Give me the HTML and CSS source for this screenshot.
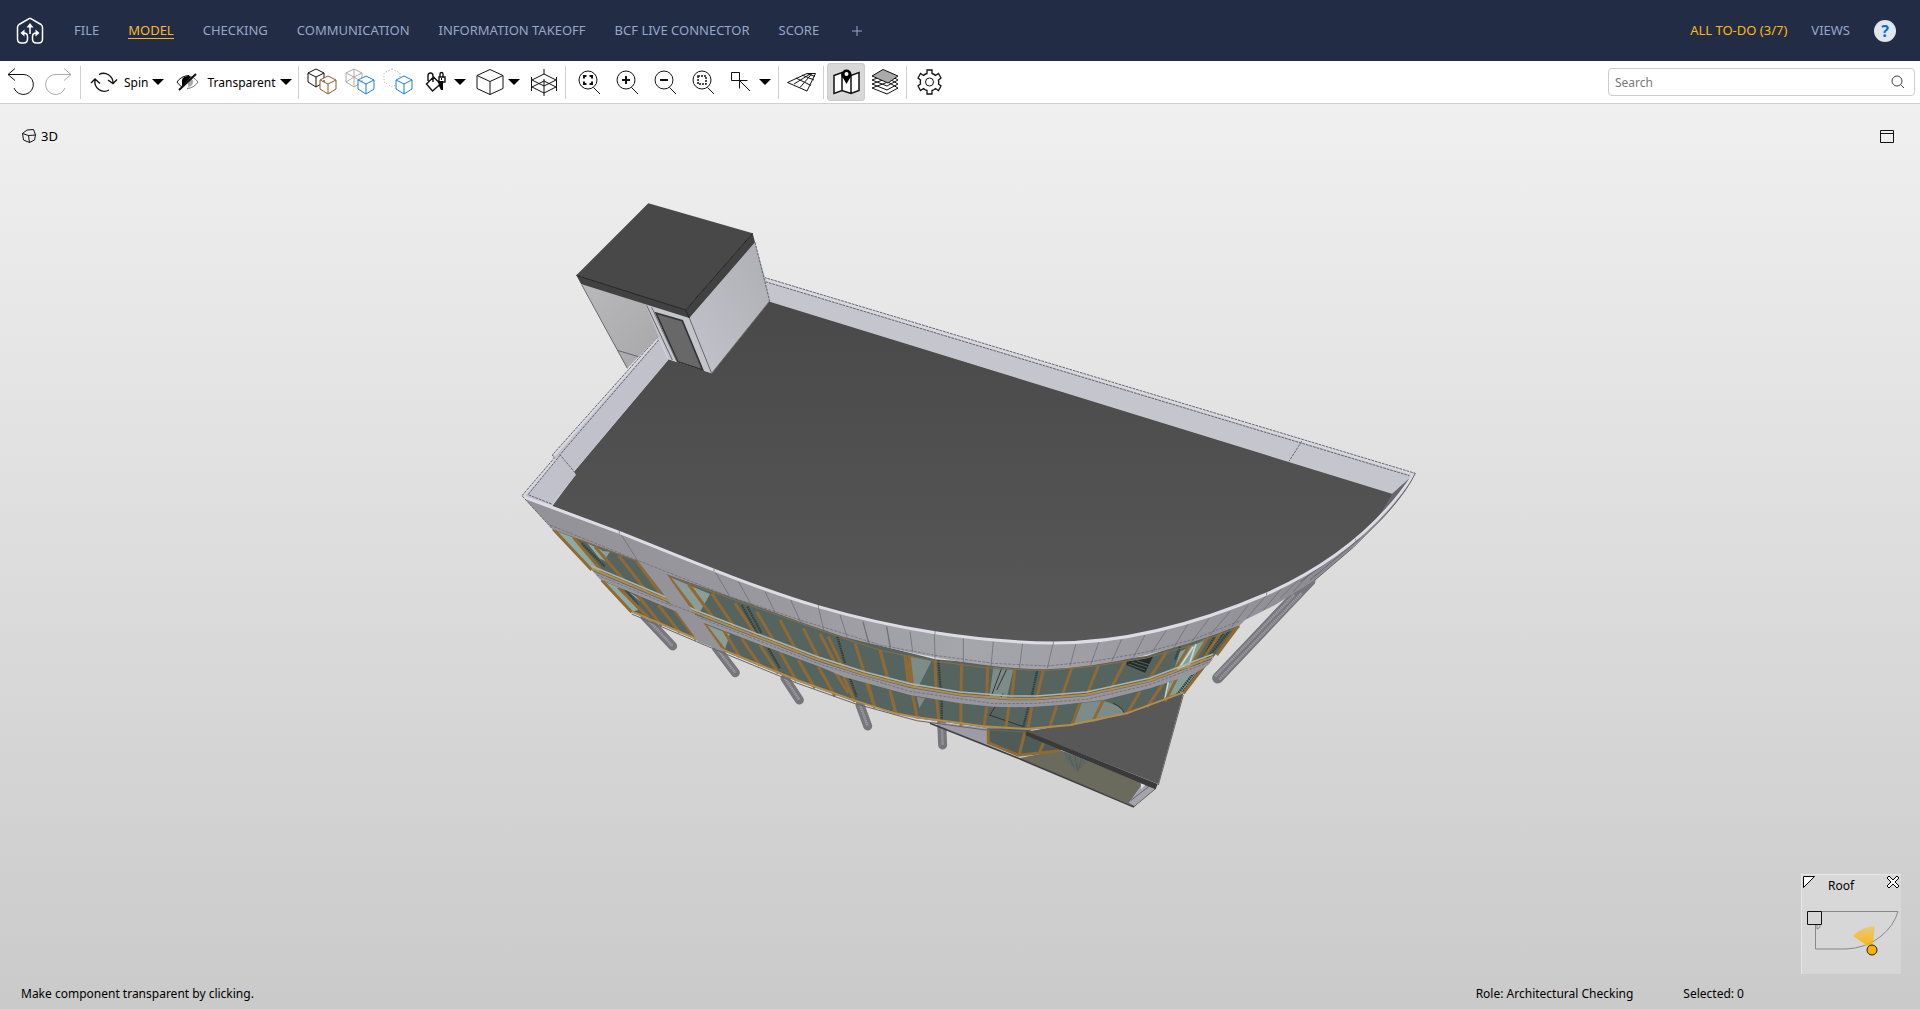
FILE: index.html
```html
<!DOCTYPE html>
<html lang="en">
<head>
<meta charset="utf-8">
<title>Model</title>
<link rel="stylesheet" href="styles.css">
</head>
<body>
<svg class="defs" aria-hidden="true">
  <symbol id="cube" viewBox="0 0 18 20"><path d="M9 1l8 4v9l-8 5-8-5V5zM1 5l8 4 8-4M9 9v10"/></symbol>
  <symbol id="caret" viewBox="0 0 12 38"><path d="M0 16h12l-6 6z"/></symbol>
</svg>
<header class="topbar">
  <a class="logo" href="#" aria-label="Home">
    <svg viewBox="0 0 28 28" width="28" height="28"><path class="stroke" d="M14 1.200L25 7.500Q26.500 8.500 26.500 10.500V22q0 4-4 4h-2q-4 0-4-4v-2.500q0-3.500 4-3.500M14 1.200L3 7.500Q1.500 8.500 1.500 10.500V22q0 4 4 4h2q4 0 4-4v-2.500q0-3.500-4-3.500M14 17V9"/><path class="fill" d="M14 6l3.500 4.500h-7zM4.500 16L8.500 12.500v7zM23.500 16L19.500 12.500v7z"/></svg>
  </a>
  <nav class="tabs">
    <a href="#">FILE</a>
    <a href="#" class="current">MODEL</a>
    <a href="#">CHECKING</a>
    <a href="#">COMMUNICATION</a>
    <a href="#">INFORMATION TAKEOFF</a>
    <a href="#">BCF LIVE CONNECTOR</a>
    <a href="#">SCORE</a>
  </nav>
  <button class="add" aria-label="Add view"><svg viewBox="0 0 12 12" width="12" height="12"><path d="M6 1v10M1 6h10"/></svg></button>
  <nav class="tabs tabs-right">
    <a href="#" class="todo">ALL TO-DO (3/7)</a>
    <a href="#">VIEWS</a>
  </nav>
  <button class="help" aria-label="Help">?</button>
</header>

<div class="toolbar">
  <button class="tool" aria-label="Undo"><svg viewBox="0 0 38 38"><path d="M14 5.500l-7 6 7 6M7 11.500h15A10 10 0 1 1 13 25"/></svg></button>
  <button class="tool off" aria-label="Redo"><svg viewBox="0 0 38 38"><path d="M25 5.500l7 6-7 6M32 11.500H17A10 10 0 1 0 26 25"/></svg></button>
  <span class="sep"></span>
  <button class="mode"><svg viewBox="0 0 28 38"><path stroke-width="1.400" d="M9 11.500A9.500 9.500 0 0 1 23 20M18 17l5 3.500 4-4M19 27A9.500 9.500 0 0 1 5 17M1 20l4-4 5 4.500"/></svg><span>Spin</span><svg class="caret"><use href="#caret"/></svg></button>
  <button class="mode"><svg viewBox="0 0 28 38"><path stroke="#777" d="M14 12.500q7 1 11 6.500-4 6-11 6.500"/><path class="gray" d="M15 14a5 5 0 0 1 0 10z"/><path d="M4 19q4-6 12-6.500M4 19q2 3 5 5"/><path class="solid" d="M9 24V17q1-4 7-4l2 1z"/><path stroke-width="2" d="M6 27L23 11"/></svg><span>Transparent</span><svg class="caret"><use href="#caret"/></svg></button>
  <span class="sep"></span>
  <button class="tool" aria-label="Show all"><svg viewBox="0 0 38 38"><use href="#cube" x="5" y="5" width="18" height="20"/><g class="brown"><use href="#cube" x="17" y="12" width="18" height="20"/></g></svg></button>
  <button class="tool" aria-label="Show transparent"><svg viewBox="0 0 38 38"><g class="ghost"><use href="#cube" x="5" y="5" width="18" height="20"/><path d="M14 6v8l8 5M14 14l-8 5"/></g><g class="blue"><use href="#cube" x="17" y="12" width="18" height="20"/></g></svg></button>
  <button class="tool" aria-label="Hide others"><svg viewBox="0 0 38 38"><path class="dots" d="M14 6l8 4v9l-8 5-8-5v-9z"/><g class="blue"><use href="#cube" x="17" y="12" width="18" height="20"/></g></svg></button>
  <button class="tool" aria-label="Colorize"><svg viewBox="0 0 38 38"><path stroke-width="1.400" d="M10.500 21l7-7 7 7-8 7zM12 18v-5q0-3 2.500-3t2.500 3v6M24 14v-3q0-1.500 1.500-1.500T27 11v3M23 14h6v5h-6z"/><path class="solid" d="M22 18h5v9h-2l-2-4zM25 15h1v2h-1z"/></svg></button>
  <button class="drop" aria-label="Colorize options"><svg class="caret"><use href="#caret"/></svg></button>
  <button class="tool" aria-label="View direction"><svg viewBox="0 0 38 38"><path d="M20 6.500l13 6v13l-13 6-13-6v-13zM7 12.500l13 6 13-6M20 18.500v13"/></svg></button>
  <button class="drop" aria-label="View direction options"><svg class="caret"><use href="#caret"/></svg></button>
  <button class="tool" aria-label="Section box"><svg viewBox="0 0 38 38"><path d="M7.500 14v14M32.500 14v14M20 6v5M20 16v17M8 17l12-6 12 6-12 6zM8 24l12-6 12 6-12 6z"/></svg></button>
  <span class="sep"></span>
  <button class="tool" aria-label="Zoom to fit"><svg viewBox="0 0 38 38"><path d="M24.500 24.500L31 31"/><circle cx="19" cy="17" r="9"/><path stroke-width="2" d="M15 15.500V13h2.500M20.500 13H23v2.500M23 18.500V21h-2.500M17.500 21H15v-2.500"/></svg></button>
  <button class="tool" aria-label="Zoom in"><svg viewBox="0 0 38 38"><path d="M24.500 24.500L31 31"/><circle cx="19" cy="17" r="9"/><path stroke-width="2" d="M15 17h8M19 13v8"/></svg></button>
  <button class="tool" aria-label="Zoom out"><svg viewBox="0 0 38 38"><path d="M24.500 24.500L31 31"/><circle cx="19" cy="17" r="9"/><path stroke-width="2" d="M15 17h8"/></svg></button>
  <button class="tool" aria-label="Zoom to selection"><svg viewBox="0 0 38 38"><path d="M24.500 24.500L31 31"/><circle cx="19" cy="17" r="9"/><path stroke-width="1.500" stroke-dasharray="2 1" d="M15 13h8v8h-8z"/></svg></button>
  <button class="tool" aria-label="Select"><svg viewBox="0 0 38 38"><path d="M10.500 9.500h8v8h-8zM18.500 17.500v8M18.500 17.500h8M18.500 17.500l10.500 10.500"/></svg></button>
  <button class="drop" aria-label="Select options"><svg class="caret"><use href="#caret"/></svg></button>
  <span class="sep"></span>
  <button class="tool" aria-label="Grid"><svg viewBox="0 0 38 38"><path d="M5.500 19.500L25 10.500h8.500L25 28zM12 21l17-10.500M18 24.500l12-14M14 15l15 7.500M20 12l12 5M25 10.500l8 3"/></svg></button>
  <span class="sep"></span>
  <button class="tool active" aria-label="Map"><svg viewBox="0 0 38 38"><path class="white" stroke-width="1.500" d="M7 12.500l8-3 9 3 8-3v18l-8 3-9-3-8 3zM15 9.500v18M24 12.500v18"/><path class="solid" d="M15 13h9l-4.500 8z"/><circle class="solid" cx="19.500" cy="11.500" r="5"/><circle cx="19.500" cy="11" r="2" fill="#fff" stroke="none"/></svg></button>
  <button class="tool" aria-label="Layers"><svg viewBox="0 0 38 38"><path class="white" d="M7 25l16-6 10 6-11 6zM7 21l16-6 10 6-11 6zM7 17l16-6 10 6-11 6z"/><path fill="#aaa" d="M7 13l11-6.500 15 6.500-10 7z"/></svg></button>
  <span class="sep"></span>
  <button class="tool" aria-label="Settings"><svg viewBox="0 0 38 38"><path stroke-width="1.300" d="M17 7h5v3.500q2 .5 3.500 2l3-2 2.500 4.500-2.500 2q.500 2 0 4l2.500 2-2.500 4.500-3-2q-1.500 1.500-3.500 2V31h-5v-3.500q-2-.500-3.500-2l-3 2L8 23l2.500-2q-.500-2 0-4L8 15l2.500-4.500 3 2q1.500-1.500 3.500-2z"/><circle cx="19.500" cy="19" r="4"/></svg></button>
  <label class="search">
    <input type="text" placeholder="Search" aria-label="Search">
    <svg viewBox="0 0 14 14" width="14" height="14"><circle cx="6" cy="6" r="5"/><path d="M9.500 9.500L13 13"/></svg>
  </label>
</div>

<main class="viewport">
  <div class="view-head">
    <svg viewBox="0 0 14 14" width="14" height="14"><path d="M.5 4.500L5 1l6.500-.5 2 5.500-1 5-5 2.500-6-2.500zM.5 4.500l6 2 7-.5M6.500 6.500l1 7"/></svg>
    <h1>3D</h1>
    <button class="maximize" aria-label="Maximize view"><svg viewBox="0 0 14 13" width="14" height="13"><path d="M.5.5h13v12H.5zM.5 3.500h13"/></svg></button>
  </div>

  <svg class="scene" viewBox="0 504 5760 2400" role="img" aria-label="3D model of a building seen from above">
    <defs>
      <linearGradient id="roof" x1="0" y1="0" x2="0" y2="1"><stop offset="0" stop-color="#494949"/><stop offset="1" stop-color="#585858"/></linearGradient>
      <linearGradient id="band" x1="0" y1="0" x2="1" y2="0"><stop offset="0" stop-color="#949299"/><stop offset=".25" stop-color="#98979e"/><stop offset=".5" stop-color="#a5a6ab"/><stop offset=".7" stop-color="#9b9aa1"/><stop offset="1" stop-color="#85848b"/></linearGradient>
      <linearGradient id="wall" x1="0" y1="0" x2="1" y2="1"><stop offset="0" stop-color="#b9b9bb"/><stop offset="1" stop-color="#a6a6aa"/></linearGradient>
      <linearGradient id="side" x1="1" y1="0" x2="0" y2="1"><stop offset="0" stop-color="#aeaeb4"/><stop offset="1" stop-color="#c3c3cc"/></linearGradient>
    </defs>

    <!-- columns below the facade -->
    <g class="column">
      <path d="M1935 1850L2018 1938M2150 1945L2206 2018M2355 2035L2398 2100M2580 2115L2603 2178M2825 2170L2828 2235"/>
      <path class="wide" d="M3930 1742L3653 2034"/>
    </g>
    <g class="column-ribs">
      <path d="M1935 1850L2018 1938M2150 1945L2206 2018M2355 2035L2398 2100M2580 2115L2603 2178M2825 2170L2828 2235M3882 1785L3645 2030M3905 1780L3658 2038"/>
    </g>

    <!-- entrance wing -->
    <g transform="translate(2580 1740)">
      <path fill="#9d9ca6" d="M215 425L390 445L390 495L470 533L260 448z"/>
      <path fill="#6a6b5c" d="M475 535L600 510L850 610L807 672z"/>
      <path fill="#4f5b57" d="M385 445L500 445L620 508L475 528L385 488z"/>
      <path class="gold" d="M385 445V488L475 526L600 512M495 455L477 526M550 490L537 520"/>
      <path fill="#5c6a60" class="edge" d="M612 516Q622 555 655 576L678 543z"/>
      <path class="rib" d="M628 528L640 560M645 530L652 570M664 537L655 572"/>
      <path fill="#a5a4ac" class="edge" d="M845 612L888 625L822 680L805 668z"/>
      <path class="edge" d="M812 662L868 618"/>
      <path fill="#dadada" d="M842 610l14 4-12 14z"/>
      <path fill="#585858" d="M498 455L700 420L970 340L895 612z"/>
      <path fill="#3a3a3a" d="M497 453L893 612L887 628L497 466z"/>
      <path stroke="#3f3f3f" stroke-width="5" fill="none" d="M210 430L475 535L822 681"/>
      <path class="edge" d="M970 345L895 615"/>
    </g>

    <!-- curved glass facade -->
    <path fill="#56645f" d="M1658 1585L1910 1680L2190 1788L2530 1908L2805 1978L3140 2006L3440 1968L3720 1875L3550 2080L3510 2095L3380 2143L3210 2178L3080 2190L2950 2182L2750 2155L2565 2105L2390 2043L2175 1955L1895 1837z"/>
    <g transform="translate(1530 1440)">
      <path fill="#8faaa0" d="M140 152L190 172L290 287L245 268zM278 302L325 322L385 390L365 395zM232 190L275 210L300 250L268 235zM355 335L380 350L392 365z"/>
      <path fill="#8c9c97" d="M478 290L600 342L572 392L552 392zM585 433L660 462L645 508zM275 212L300 215L285 238z"/>
    </g>
    <g transform="translate(2580 1740)">
      <path fill="#7b8c89" d="M150 228L215 242L175 320L158 318zM400 262L460 268L440 355L388 350zM170 350L195 355L178 385zM640 432L665 368L730 362L700 425zM700 425L730 362Q780 375 795 400z"/>
      <path fill="#84a199" d="M960 215L1040 175L990 262L940 275zM925 310L1020 262L975 335L920 350z"/>
      <path stroke="#333" fill="none" stroke-width="3" d="M410 330L440 268M395 345L425 265M388 405L490 440M388 408L430 340M760 370Q785 380 793 400"/>
      <path fill="#232a28" d="M800 245L880 228L855 278L800 255z"/>
      <path stroke="#72807b" stroke-width="2" d="M805 252L855 270M815 246L862 262M830 242L868 254"/>
      <path stroke="#c8d8d2" stroke-width="5" fill="none" d="M1008 192L985 262M955 268L1000 200M925 305L915 355M950 262L985 258"/>
      <path class="shade" d="M1090 160L1010 262M1110 150L1040 238M1010 268L950 345M1030 258L965 340M1065 168L1020 250M960 200L945 240"/>
    </g>
    <!-- interior columns behind the glass -->
    <path class="shade" d="M2225 1815L2275 1905M2242 1820L2285 1900M2512 1910L2535 1990M2305 1945L2340 2005M2550 2035L2570 2090M2815 1980L2822 2070M2825 2095V2165M3112 2010L3095 2090M3085 2120L3070 2180M1745 1630L1815 1700M1870 1760L1915 1815"/>

    <g transform="translate(1530 1440)">
      <path class="gold" d="M130 148L245 270M190 172L290 290M255 200L350 310M325 225L410 335M380 243L465 360M275 300L365 397M325 322L415 412M385 348L455 437M445 375L510 458M490 385L560 480"/>
      <path class="gold" d="M474 287L560 400M535 312L615 420M605 340L672 440M675 370L740 468M740 395L797 492M810 420L862 518M880 445L930 543M930 462L975 548M955 470L998 562M1035 490L1065 585M1110 510L1135 603M1185 525L1195 612"/>
      <path class="gold" d="M580 428L645 513M640 450L690 532M695 475L750 557M750 495L805 580M810 515L860 603M865 540L915 625M925 560L975 648M975 575L1015 640M1000 590L1035 665M1070 610L1095 683M1140 630L1158 700"/>
    </g>
    <g transform="translate(2580 1740)">
      <path class="gold" d="M60 210L85 302M135 225L155 318M147 226L158 318M225 240L228 328M305 250L303 345M383 260L380 350M465 265L455 355M550 270L530 355M635 265L605 352M715 258L680 345M795 245L750 332M920 215L865 302M990 195L935 285M1045 170L990 262M1085 155L1020 250M1135 138L1070 225"/>
      <path class="gold" d="M25 313L45 385M90 330L107 400M158 345L172 415M230 357L237 428M303 370V437M380 380L372 442M447 380L437 447M515 382L503 450M590 378L568 445M660 370L635 438M730 360L698 425M840 335L800 402M910 310L860 382M950 295L915 365M1035 255L970 340"/>
    </g>
    <!-- window sills and heads -->
    <path class="sill-light" d="M1775 1698L1995 1790L2085 1830L2270 1901L2460 1973L2595 2016L2730 2051L2880 2076L3030 2088L3110 2088L3260 2076L3450 2034L3640 1962"/>
    <path class="gold thin" d="M1775 1706L1995 1798L2085 1838L2270 1909L2460 1981L2595 2024L2730 2059L2880 2084L3030 2096L3110 2096L3260 2084L3450 2042L3640 1970"/>
    <path class="gold thin" d="M1895 1834L2090 1917L2175 1952L2390 2040L2565 2102L2685 2140L2750 2152L2950 2179L3080 2187L3210 2175L3380 2140L3510 2092L3550 2077"/>
    <path class="gold head" d="M1658 1588L1910 1683M2000 1726L2190 1795L2400 1869L2530 1914L2640 1951L2805 1984L2980 2006L3140 2012L3280 1999L3440 1974L3580 1934L3720 1880"/>
    <path class="edge" d="M1895 1842L2090 1925L2175 1961L2390 2049L2565 2111L2750 2162L2950 2189L3080 2196"/>
    <!-- band between the storeys -->
    <path fill="#97969e" d="M1778 1713L1995 1804L2085 1844L2270 1914L2460 1987L2595 2029L2730 2064L2880 2089L3030 2101L3110 2101L3260 2089L3450 2047L3640 1976L3625 1995L3580 2023L3450 2065L3310 2100L3180 2115L3080 2122L2980 2120L2880 2110L2730 2085L2530 2030L2460 2000L2270 1930L2110 1868L1970 1810L1800 1738z"/>
    <path class="dash" d="M1790 1724L2110 1858L2460 1993L2730 2074L2980 2111L3110 2110L3260 2098L3450 2054L3630 1985"/>
    <path fill="#95939a" d="M1910 1678L1998 1720L2084 1842L2110 1868L2172 1955L2135 1941L2095 1925L2010 1808z"/>
    <path class="dash" d="M2000 1808L2110 1850"/>

    <!-- parapet band and its panel joints -->
    <path fill="url(#band)" d="M1566 1488L1858 1595C2050 1672 2260 1760 2455 1818C2680 1884 2930 1925 3160 1927C3380 1927 3600 1866 3800 1780C4000 1690 4150 1570 4246 1420Q4222 1475 4150 1552L4050 1650L3945 1740L3825 1815L3735 1860L3720 1875Q3420 1995 3140 2008Q2900 2006 2530 1910L2400 1865L2190 1790L2000 1723L1910 1680L1658 1588z"/>
    <path class="dash" d="M1650 1575L1910 1680L2190 1790L2400 1860L2530 1900L2640 1935L2805 1966L2980 1990L3140 1998L3280 1984L3440 1956L3580 1918L3720 1862"/>
    <g transform="translate(1530 1440)"><path class="joint" d="M328 155L383 242M612 270L660 350M685 305L725 375M765 335L800 407M842 360L875 432M925 380L943 458M990 405L1012 473M1058 425L1078 490M1130 440L1142 500"/></g>
    <g transform="translate(2580 1740)"><path class="joint" d="M10 125L25 190M80 140L90 205M150 155L158 215M223 155L225 238M310 175V248M400 185L393 260M488 190L478 265M580 187L562 265M648 190L630 258M717 185L692 254M785 178L755 244M855 165L820 232M920 150L875 218M985 130L940 205M1048 115L995 185M1110 95L1050 165M1165 75L1115 140M1220 45L1160 115M1270 20L1210 90M1320 -5L1260 55M1365 -35L1300 35"/></g>
    <path class="rib" d="M3900 1745L4060 1630L4150 1545M3930 1740L4080 1615"/>

    <!-- main roof and inner parapet faces -->
    <path fill="url(#roof)" d="M2309 903L2135 1120L2005 1078L1722 1415L1726 1425L1657 1518L1858 1595C2050 1672 2260 1760 2455 1818C2680 1884 2930 1925 3160 1927C3380 1927 3600 1866 3800 1780C4000 1690 4150 1570 4246 1420L4178 1480z"/>
    <path fill="#c5c5ce" d="M2292 832L4246 1420L4178 1482L2309 905z"/>
    <path fill="#c1c1cb" d="M1974 1010L2005 1080L1722 1415L1728 1424L1655 1516L1566 1488L1662 1374L1657 1365z"/>
    <path fill="#68676d" d="M4240 1424L4178 1480L4135 1552z"/>
    <path class="coping" d="M1568 1490L1858 1597C2050 1674 2260 1762 2455 1820C2680 1886 2930 1927 3160 1929C3380 1929 3600 1868 3800 1782C4000 1692 4146 1570 4242 1422"/>
    <path class="joint" d="M1858 1592v10M2142 1705v10M2455 1815v10M2805 1893v10M3160 1924v10M3800 1777v10M4065 1616l5 8"/>
    <path class="edge" d="M4246 1420Q4220 1475 4150 1552L4060 1642L3945 1740"/>
    <path stroke="#d8d8de" stroke-width="9" fill="none" d="M2294 838L4236 1421M1970 1018L1662 1366M1664 1376L1572 1486"/>
    <path class="edge dashed" d="M2292 832L4246 1420M2296 845L4228 1427M1974 1010L1657 1365L1663 1374L1566 1487L1658 1588M1976 1020L1680 1364L1725 1418M1680 1366L1584 1484L1655 1512M3905 1324L3867 1384"/>

    <!-- stair tower -->
    <g transform="translate(1530 570)">
      <path fill="url(#wall)" d="M215 282L420 342L485 510L445 440L352 535z"/>
      <path fill="#c4c4cb" d="M405 342L540 382L605 550L475 508z"/>
      <path fill="url(#side)" d="M538 384L735 157L765 262L779 333L605 550z"/>
      <path fill="#686868" stroke="#333" stroke-width="5" d="M438 369L517 392L578 540L503 515z"/>
      <path class="edge" d="M215 284L352 535M322 481L385 500M410 346L487 510M425 352L500 513M538 384L605 550L779 333"/>
      <path class="edge dashed" d="M735 157L779 333"/>
      <path fill="#414141" d="M199 256L527 360L728 130L735 157L538 384L213 282z"/>
      <path fill="#484848" d="M415 40L728 130L527 360L199 256z"/>
      <path stroke="#222" stroke-width="3" fill="none" d="M199 256L527 360L728 130M527 360L538 384"/>
    </g>
  </svg>

  <footer class="status">
    <span class="hint">Make component transparent by clicking.</span>
    <span>Role: Architectural Checking</span>
    <span>Selected: 0</span>
  </footer>

  <section class="minimap">
    <header>
      <button aria-label="Resize map"><svg viewBox="0 0 14 14" width="14" height="14"><path d="M1.500 1.500h11l-11 11z"/></svg></button>
      <h2>Roof</h2>
      <button aria-label="Close map"><svg viewBox="0 0 14 14" width="14" height="14"><path d="M3 1l4 4 4-4 2 2-4 4 4 4-2 2-4-4-4 4-2-2 4-4-4-4z"/></svg></button>
    </header>
    <svg class="plan" viewBox="0 24 100 76">
      <defs><linearGradient id="beam" x1="0" y1="0" x2="0" y2="1"><stop offset="0" stop-color="#ffb400" stop-opacity=".4"/><stop offset="1" stop-color="#ffb400"/></linearGradient></defs>
      <path class="outline" d="M20 37.500h77Q93 52 79 63 65 74 45 75H14.500V51M16 51v4q4-1 3-4"/>
      <path fill="url(#beam)" d="M52 62q8-9 22-10l-3 23z"/>
      <path class="box" d="M6.500 37.500h14v13h-14z"/>
      <circle cx="71" cy="76" r="5"/>
    </svg>
  </section>
</main>
</body>
</html>
```

FILE: styles.css
```css
* {
  box-sizing: border-box;
}

body {
  margin: 0;
  min-height: 100vh;
  display: flex;
  flex-direction: column;
  font-family: "Noto Sans", "Open Sans", sans-serif;
  font-size: 12px;
  color: #000;
}

button {
  display: flex;
  align-items: center;
  justify-content: center;
  padding: 0;
  border: 0;
  background: none;
  font: inherit;
  color: inherit;
}

svg {
  display: block;
}

.defs {
  position: absolute;
  width: 0;
  height: 0;
}

/* top navigation */
.topbar {
  display: flex;
  align-items: center;
  height: 61px;
  padding: 0 24px 0 16px;
  background: #222d45;
  font-size: 13px;
}

.logo .stroke {
  fill: none;
  stroke: #fff;
  stroke-width: 1.5;
}

.logo .fill {
  fill: #fff;
}

.tabs {
  display: flex;
  gap: 29px;
  margin-left: 30px;
}

.tabs a {
  color: #97a6c9;
  text-decoration: none;
  line-height: 16px;
  border-bottom: 1px solid transparent;
}

.tabs a.current {
  color: #fdb72b;
  border-color: #fdb72b;
}

.tabs a.todo {
  color: #fdb714;
}

.add {
  margin-left: 32px;
}

.add svg {
  fill: none;
  stroke: #97a6c9;
}

.tabs-right {
  margin-left: auto;
  gap: 24px;
}

.help {
  width: 22px;
  height: 22px;
  margin-left: 24px;
  border-radius: 50%;
  background: #e1e5ec;
  color: #0a6cd6;
  font-size: 16px;
  font-weight: 700;
}

/* toolbar */
.toolbar {
  display: flex;
  align-items: center;
  height: 43px;
  padding: 0 5px 0 1px;
  background: #fff;
  border-bottom: 1px solid #d0d0d0;
}

.toolbar svg {
  fill: none;
  stroke: #111;
}

.tool {
  width: 38px;
  height: 38px;
}

.tool svg {
  width: 38px;
  height: 38px;
}

.tool.off svg {
  stroke: #aaa;
}

.tool.active {
  border-radius: 4px;
  background: #d8d8d8;
  box-shadow: inset 0 0 0 1px #ccc;
}

.mode {
  height: 38px;
  padding: 0 3px 0 6px;
}

.mode svg {
  width: 28px;
  height: 38px;
}

.mode span {
  margin: 0 4px 0 6px;
}

.drop {
  width: 16px;
  height: 38px;
  justify-content: flex-start;
}

.toolbar .caret {
  width: 12px;
  height: 38px;
  fill: #000;
  stroke: none;
}

.sep {
  width: 1px;
  height: 33px;
  margin: 0 3px;
  background: #d0d0d0;
}

.brown {
  stroke: #8e5a2b;
  fill: #fff;
}

.blue {
  stroke: #1b7fd8;
  fill: #fff;
}

.ghost {
  stroke: #aaa;
}

.dots {
  stroke: #aaa;
  stroke-dasharray: 1 2;
}

.solid {
  fill: #000;
  stroke: none;
}

.gray {
  fill: #aaa;
  stroke: none;
}

.white {
  fill: #fff;
}

.search {
  display: flex;
  align-items: center;
  width: 307px;
  height: 28px;
  margin-left: auto;
  padding: 0 9px 0 6px;
  border: 1px solid #ccc;
  border-radius: 4px;
}

.search input {
  flex: 1;
  min-width: 0;
  padding: 0;
  border: 0;
  outline: 0;
  background: none;
  font: inherit;
}

.search input::placeholder {
  color: #777;
}

.toolbar .search svg {
  stroke: #444;
}

/* viewport */
.viewport {
  position: relative;
  flex: 1;
  display: flex;
  flex-direction: column;
  background: linear-gradient(#f0f0f0, #cacaca);
}

.view-head {
  display: flex;
  align-items: center;
  height: 64px;
  padding: 0 26px 0 22px;
}

.view-head svg {
  fill: none;
  stroke: #111;
}

.view-head h1 {
  margin: 0 0 0 5px;
  font-size: 13px;
  font-weight: 400;
}

.maximize {
  margin-left: auto;
}

.scene {
  flex: 1;
  width: 100%;
  min-height: 0;
}

.edge {
  stroke: #66656b;
  stroke-width: 3;
}

path.edge:not([fill]) {
  fill: none;
}

.dashed {
  stroke-dasharray: 8 3;
}

.dash {
  fill: none;
  stroke: #66656b;
  stroke-width: 2;
  stroke-dasharray: 9 4;
}

.joint {
  fill: none;
  stroke: #66666c;
  stroke-width: 2;
}

.rib {
  fill: none;
  stroke: #55555a;
  stroke-width: 2;
}

.coping {
  fill: none;
  stroke: #dddce5;
  stroke-width: 9;
}

.gold {
  fill: none;
  stroke: #8f6a35;
  stroke-width: 9;
}

.gold.thin {
  stroke: #b38c50;
  stroke-width: 6;
}

.gold.head {
  stroke: #8a6c42;
  stroke-width: 3;
}

.sill-light {
  fill: none;
  stroke: #a9b5ae;
  stroke-width: 5;
}

.shade {
  fill: none;
  stroke: #33403d;
  stroke-width: 7;
  stroke-dasharray: 5 2;
}

.column {
  fill: none;
  stroke: #77767c;
  stroke-width: 27;
  stroke-linecap: round;
}

.column .wide {
  stroke-width: 33;
}

.column-ribs {
  fill: none;
  stroke: #9b9aa1;
  stroke-width: 8;
  stroke-dasharray: 4 2;
}

.status {
  display: flex;
  align-items: center;
  gap: 50px;
  height: 41px;
  padding: 9px 176px 0 21px;
}

.hint {
  margin-right: auto;
}

/* floor plan overlay */
.minimap {
  position: absolute;
  right: 19px;
  bottom: 35px;
  width: 100px;
  height: 100px;
  background: rgb(255 255 255 / 20%);
  box-shadow: inset 1px 1px 0 rgb(255 255 255 / 40%);
}

.minimap header {
  display: flex;
  justify-content: space-between;
  height: 24px;
  padding: 1px;
}

.minimap header svg {
  fill: #fff;
  stroke: #000;
}

.minimap header button {
  height: 14px;
}

.minimap h2 {
  margin: 0;
  padding-right: 20px;
  font-size: 12px;
  font-weight: 400;
  line-height: 21px;
}

.plan {
  width: 100px;
  height: 76px;
}

.plan .outline {
  fill: none;
  stroke: #888;
}

.plan .box {
  fill: #d6d6d6;
  stroke: #111;
}

.plan circle {
  fill: #ffb000;
  stroke: #222;
}
```
